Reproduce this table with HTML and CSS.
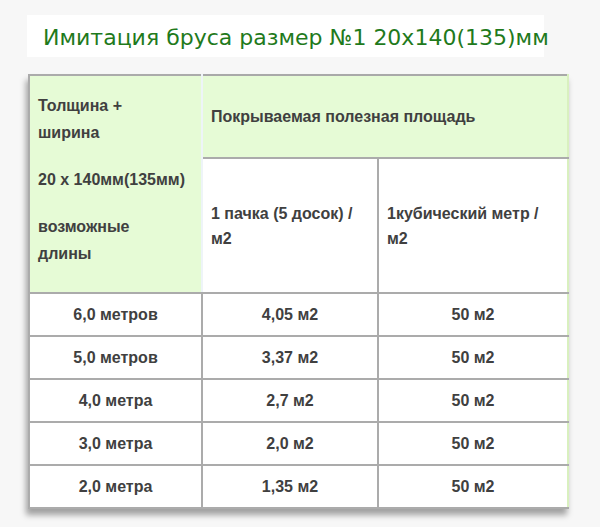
FILE: index.html
```html
<!DOCTYPE html>
<html lang="ru">
<head>
<meta charset="utf-8">
<title>Имитация бруса</title>
<link rel="stylesheet" href="styles.css">
</head>
<body>
<div class="page">
  <div class="title-box">
    <h2 class="title">Имитация бруса размер №1 20x140(135)мм</h2>
  </div>
  <table class="sizes">
    <colgroup>
      <col class="c1"><col class="c2"><col class="c3">
    </colgroup>
    <thead>
      <tr class="h1">
        <th rowspan="2" class="green first">
          <p>Толщина +<br>ширина</p>
          <p>20 x 140мм(135мм)</p>
          <p>возможные<br>длины</p>
        </th>
        <th colspan="2" class="green area">Покрываемая полезная площадь</th>
      </tr>
      <tr class="h2">
        <th>1 пачка (5 досок) / м2</th>
        <th class="last">1кубический метр / м2</th>
      </tr>
    </thead>
    <tbody>
      <tr><td>6,0 метров</td><td>4,05 м2</td><td class="last">50 м2</td></tr>
      <tr><td>5,0 метров</td><td>3,37 м2</td><td class="last">50 м2</td></tr>
      <tr><td>4,0 метра</td><td>2,7 м2</td><td class="last">50 м2</td></tr>
      <tr><td>3,0 метра</td><td>2,0 м2</td><td class="last">50 м2</td></tr>
      <tr><td>2,0 метра</td><td>1,35 м2</td><td class="last">50 м2</td></tr>
    </tbody>
  </table>
</div>
</body>
</html>
```
FILE: styles.css
```css
html, body {
  margin: 0;
  padding: 0;
  background: #f7f7f7;
}
.page {
  width: 600px;
  height: 527px;
  padding-top: 15px;
  box-sizing: border-box;
}
.title-box {
  margin-left: 27px;
  width: 517px;
  height: 42px;
  background: #ffffff;
  box-sizing: border-box;
  padding: 4px 0 0 16px;
}
.title {
  margin: 0;
  font-family: "DejaVu Sans", Verdana, sans-serif;
  font-weight: normal;
  font-size: 22px;
  line-height: 38px;
  color: #1f7a1c;
  white-space: nowrap;
}
.sizes {
  margin-top: 17px;
  margin-left: 28px;
  width: 539px;
  border-collapse: collapse;
  table-layout: fixed;
  background: #ffffff;
  font-family: "Liberation Sans", Arial, sans-serif;
  font-size: 16px;
  font-weight: bold;
  color: #404040;
  box-shadow: -2px 6px 6px rgba(0, 0, 0, 0.35);
  border-top: 2px solid #a9a9a9;
  border-left: 2px solid #9a9a9a;
  border-bottom: 2px solid #a9a9a9;
  border-right: 2px solid #d9f0bf;
}
.c1 { width: 173px; }
.c2 { width: 176px; }
.c3 { width: 190px; }
.sizes th, .sizes td {
  border: 2px solid #ababab;
  padding: 0 8px;
  line-height: 25px;
}
.sizes th {
  text-align: left;
  font-weight: bold;
}
.sizes .green {
  background: #e6fbd6;
}
.sizes th.first {
  border-right: 2px solid #eef4f8;
  vertical-align: middle;
  line-height: 27px;
  padding-bottom: 9px;
}
.sizes th.first p {
  margin: 0 0 20px;
}
.sizes th.first p:last-child {
  margin-bottom: 0;
}
.sizes tr.h1 { height: 83px; }
.sizes th.area {
  border-top: none;
  border-right: 2px solid #d9f0bf;
}
.sizes tr.h2 { height: 135px; }
.sizes td {
  text-align: center;
  height: 41px;
}
.sizes .last {
  border-right: 2px solid #d9f0bf;
}
```
